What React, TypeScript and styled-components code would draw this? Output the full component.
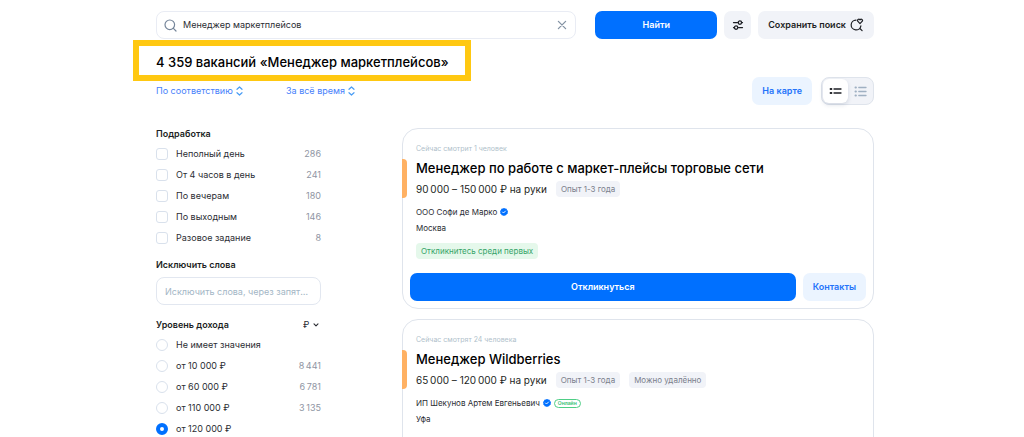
import React from "react";
import styled, { createGlobalStyle, css } from "styled-components";

const GlobalStyle = createGlobalStyle`
  *, *::before, *::after { box-sizing: border-box; }
  body {
    margin: 0;
    background: #fff;
    color: #2b2d33;
    font-family: Inter, "Liberation Sans", sans-serif;
    font-size: 9px;
    line-height: 14px;
  }
  button, input, select { font: inherit; color: inherit; }
  button { cursor: pointer; }
  h1, h2, h3, p { margin: 0; padding: 0; }
  svg { flex: none; }
`;

const Page = styled.div`
  height: 100vh;
  overflow: hidden;
  padding: 11px 150px 0 156px;
`;

const SearchForm = styled.form`
  display: flex;
  gap: 7px;
`;

const SearchField = styled.label`
  flex: 1;
  display: flex;
  align-items: center;
  gap: 6px;
  height: 28px;
  margin-right: 12px;
  padding: 0 8px 0 7px;
  border: 1px solid #e9ecf4;
  border-radius: 8px;
`;

const SearchInput = styled.input`
  flex: 1;
  min-width: 0;
  padding: 0;
  border: 0;
  outline: 0;
  background: none;
`;

const IconButton = styled.button`
  display: flex;
  padding: 0;
  border: 0;
  background: none;
`;

const tones = {
  primary: css`background: #0070ff; color: #fff;`,
  grey: css`background: #f1f3f8; color: #1d1f24;`,
  light: css`background: #ebf4ff; color: #2473fa;`,
};

const Button = styled.button<{ $tone: keyof typeof tones; $width?: number; $grow?: boolean }>`
  display: flex;
  align-items: center;
  justify-content: center;
  gap: 4px;
  height: 28px;
  padding: 0 10px;
  border: 0;
  border-radius: 7px;
  font-weight: 600;
  white-space: nowrap;
  ${(p) => p.$width && `width: ${p.$width}px; padding: 0;`}
  ${(p) => p.$grow && "flex: 1;"}
  ${(p) => tones[p.$tone]}
`;

const Title = styled.h1`
  position: relative;
  width: max-content;
  padding: 13px 0 5px;
  color: #000;
  font-size: 13px;
  font-weight: 500;
  line-height: 20px;

  &::after {
    content: "";
    position: absolute;
    inset: 1px -22px -4px -23px;
    border: 6px solid #ffc811;
    pointer-events: none;
  }
`;

const SortBar = styled.div`
  display: flex;
  align-items: center;
  gap: 43px;
`;

const SelectBox = styled.label<{ $blue?: boolean }>`
  display: flex;
  align-items: center;
  gap: 3px;
  color: ${(p) => (p.$blue ? "#4680fb" : "#2b2d33")};
`;

const Select = styled.select`
  appearance: none;
  padding: 0;
  border: 0;
  outline: 0;
  background: none;
`;

const ViewControls = styled.div`
  display: flex;
  gap: 9px;
  margin-left: auto;
`;

const Toggle = styled.div`
  display: flex;
  height: 28px;
  padding: 1px 0 1px 1px;
  border: 1px solid #dfe4ec;
  border-radius: 8px;
  background: #f1f3f8;
`;

const ToggleButton = styled.button<{ $active?: boolean }>`
  display: flex;
  align-items: center;
  justify-content: center;
  width: 25px;
  padding: 0;
  border: 0;
  border-radius: 6px;
  background: ${(p) => (p.$active ? "#fff" : "transparent")};
  color: ${(p) => (p.$active ? "#1d1f24" : "#9fb0c2")};
  box-shadow: ${(p) => (p.$active ? "0 2px 4px rgba(40, 60, 100, 0.15)" : "none")};
`;

const Columns = styled.div`
  display: grid;
  grid-template-columns: 165px minmax(0, 1fr);
  gap: 81px;
  margin-top: 22px;
`;

const Filters = styled.aside`
  display: flex;
  flex-direction: column;
  gap: 10px;
`;

const Group = styled.div`
  display: flex;
  flex-direction: column;
`;

const GroupHead = styled.div`
  display: flex;
  justify-content: space-between;
  padding-right: 2px;
`;

const GroupTitle = styled.h2`
  color: #1d1f24;
  font-size: 9px;
  font-weight: 600;
  line-height: 14px;
`;

const Options = styled.ul`
  display: grid;
  gap: 1px;
  margin: 3px 0 0;
  padding: 0;
  list-style: none;
`;

const Option = styled.label`
  display: flex;
  align-items: center;
  height: 20px;
`;

const Count = styled.span`
  margin-left: auto;
  color: #8f95a3;
`;

const Mark = styled.input`
  appearance: none;
  width: 12px;
  height: 12px;
  margin: 0 8px 0 0;
  border: 1px solid #d9e1ec;
  border-radius: ${(p) => (p.type === "radio" ? "50%" : "3px")};
  background: #fff;

  &:checked {
    border: 4px solid #0070ff;
  }
`;

const WordsInput = styled.input`
  width: 100%;
  height: 28px;
  margin: 5px 0 3px;
  padding: 0 8px;
  border: 1px solid #e2e7f0;
  border-radius: 8px;
  outline: 0;
  text-overflow: ellipsis;

  &::placeholder {
    color: #a3b6c5;
    opacity: 1;
  }
`;

const Results = styled.main`
  display: grid;
  grid-auto-rows: 1fr;
  align-self: start;
  gap: 10px;
  padding-top: 1px;
`;

const Card = styled.article`
  position: relative;
  display: flex;
  flex-direction: column;
  padding: 13px 7px 7px;
  border: 1px solid #dfe4ec;
  border-radius: 16px;

  &::before {
    content: "";
    position: absolute;
    top: 30px;
    left: -1px;
    width: 5px;
    height: 39px;
    border-radius: 0 4px 4px 0;
    background: #ffb163;
  }
`;

const CardBody = styled.div`
  padding: 0 6px;
`;

const Watching = styled.p`
  color: #b0bfcb;
  font-size: 7px;
`;

const JobTitle = styled.h3`
  margin-top: 3px;
  color: #000;
  font-size: 13px;
  font-weight: 500;
  line-height: 18px;
`;

const PayRow = styled.div`
  display: flex;
  align-items: center;
  gap: 9px;
  margin-top: 4px;
`;

const Pay = styled.span`
  color: #1d1f24;
  font-size: 10px;
`;

const Tag = styled.span<{ $green?: boolean }>`
  display: inline-block;
  padding: 0 5px;
  border-radius: 4px;
  background: ${(p) => (p.$green ? "#e5f8eb" : "#f1f3f8")};
  color: ${(p) => (p.$green ? "#35a468" : "#7b808c")};
  font-size: 8px;
  line-height: 16px;
`;

const Company = styled.p`
  display: flex;
  align-items: center;
  gap: 3px;
  margin-top: 7px;
  font-size: 8px;
  line-height: 16px;
`;

const City = styled.p`
  margin-bottom: 7px;
  font-size: 8px;
  line-height: 16px;
`;

const Online = styled.span`
  padding: 0 3px;
  border: 1px solid #4fce86;
  border-radius: 5px;
  color: #35c070;
  font-size: 5px;
  font-weight: 600;
  line-height: 7px;
`;

const Actions = styled.div`
  display: flex;
  gap: 7px;
  margin-top: auto;
  padding-top: 14px;
`;

const SearchIcon = () => (
  <svg width="13" height="13" viewBox="0 0 13 13" fill="none" stroke="#75859a" strokeWidth="1.2" strokeLinecap="round">
    <circle cx="5.8" cy="5.8" r="4.8" />
    <path d="M9.4 9.4 12 12" />
  </svg>
);

const CloseIcon = () => (
  <svg width="10" height="10" viewBox="0 0 10 10" stroke="#8392a3" strokeWidth="1.3" strokeLinecap="round">
    <path d="m1.4 1.4 7.2 7.2m0-7.2L1.4 8.6" />
  </svg>
);

const SlidersIcon = () => (
  <svg width="12" height="12" viewBox="0 0 12 12" fill="none" stroke="currentColor" strokeWidth="1.3" strokeLinecap="round">
    <path d="M1.5 3.6h4M10 3.6h.5M1.5 8.6H2M6.5 8.6h4" />
    <circle cx="7.9" cy="3.6" r="1.7" />
    <circle cx="4.1" cy="8.6" r="1.7" />
  </svg>
);

const SaveSearchIcon = () => (
  <svg width="14" height="14" viewBox="0 0 14 14" fill="none" stroke="currentColor" strokeWidth="1.2" strokeLinecap="round" strokeLinejoin="round">
    <path d="M6 2.1A4.9 4.9 0 1 0 10.9 7.8M9.9 10.5l2.2 2.2" />
    <path d="M10 5.6 7.7 3.2C6.9 1.9 8.7.4 10 1.8c1.3-1.4 3.1.1 2.3 1.4Z" />
  </svg>
);

const UpDownIcon = () => (
  <svg width="7" height="10" viewBox="0 0 7 10" fill="none" stroke="#4a9df5" strokeWidth="1.2" strokeLinecap="round" strokeLinejoin="round">
    <path d="m1 3.3 2.5-2.3L6 3.3M1 6.7 3.5 9 6 6.7" />
  </svg>
);

const ChevronIcon = () => (
  <svg width="6" height="4" viewBox="0 0 6 4" fill="none" stroke="currentColor" strokeWidth="1.1" strokeLinecap="round" strokeLinejoin="round">
    <path d="m1 .8 2 2 2-2" />
  </svg>
);

const CompactListIcon = () => (
  <svg width="13" height="8" viewBox="0 0 13 8" stroke="currentColor" strokeWidth="1.3" strokeLinecap="round">
    <path d="M5 2h7M5 6h7" />
    <path d="M1.7 2h.6M1.7 6h.6" strokeWidth="2.2" />
  </svg>
);

const ListIcon = () => (
  <svg width="13" height="11" viewBox="0 0 13 11" stroke="currentColor" strokeWidth="1.3" strokeLinecap="round">
    <path d="M4.8 1.5H12M4.8 5.5H12M4.8 9.5H12" />
    <path d="M1.5 1.5h.4M1.5 5.5h.4M1.5 9.5h.4" strokeWidth="2" />
  </svg>
);

const VerifiedIcon = () => (
  <svg width="8" height="8" viewBox="0 0 8 8" fill="none">
    <path d="m4 0 1.2.5 1.4.2.4 1.3 1 1-.3 1.2.1 1.3-1.1.7-.7 1.1-1.2.1L4 8l-1-.6-1.3-.1-.5-1.1L.2 5.5l.2-1.3L0 3l1-1L1.4.7 2.8.5Z" fill="#0070ff" />
    <path d="m2.5 4 1 1 2-2" stroke="#fff" strokeWidth=".9" strokeLinecap="round" />
  </svg>
);

const workOptions: [string, string][] = [
  ["Неполный день", "286"],
  ["От 4 часов в день", "241"],
  ["По вечерам", "180"],
  ["По выходным", "146"],
  ["Разовое задание", "8"],
];

const incomeOptions: [string, string][] = [
  ["Не имеет значения", ""],
  ["от 10 000 ₽", "8\u2009441"],
  ["от 60 000 ₽", "6\u2009781"],
  ["от 110 000 ₽", "3\u2009135"],
  ["от 120 000 ₽", ""],
];

const jobs = [
  {
    watching: "Сейчас смотрит 1 человек",
    title: "Менеджер по работе с маркет-плейсы торговые сети",
    pay: "90\u2009000 – 150\u2009000 ₽ на руки",
    tags: ["Опыт 1-3 года"],
    company: "ООО Софи де Марко",
    city: "Москва",
    online: false,
    open: true,
  },
  {
    watching: "Сейчас смотрят 24 человека",
    title: "Менеджер Wildberries",
    pay: "65\u2009000 – 120\u2009000 ₽ на руки",
    tags: ["Опыт 1-3 года", "Можно удалённо"],
    company: "ИП Шекунов Артем Евгеньевич",
    city: "Уфа",
    online: true,
    open: false,
  },
];

export default function App() {
  return (
    <>
      <GlobalStyle />
      <Page>
        <SearchForm onSubmit={(e) => e.preventDefault()}>
          <SearchField>
            <SearchIcon />
            <SearchInput aria-label="Поиск вакансий" defaultValue="Менеджер маркетплейсов" />
            <IconButton type="button" aria-label="Очистить">
              <CloseIcon />
            </IconButton>
          </SearchField>
          <Button $tone="primary" $width={122}>Найти</Button>
          <Button type="button" $tone="grey" $width={27} aria-label="Фильтры">
            <SlidersIcon />
          </Button>
          <Button type="button" $tone="grey">
            Сохранить поиск
            <SaveSearchIcon />
          </Button>
        </SearchForm>

        <Title>4 359 вакансий «Менеджер маркетплейсов»</Title>

        <SortBar>
          <SelectBox $blue>
            <Select aria-label="Сортировка">
              <option>По соответствию</option>
            </Select>
            <UpDownIcon />
          </SelectBox>
          <SelectBox $blue>
            <Select aria-label="Период">
              <option>За всё время</option>
            </Select>
            <UpDownIcon />
          </SelectBox>
          <ViewControls>
            <Button type="button" $tone="light">На карте</Button>
            <Toggle>
              <ToggleButton $active aria-pressed="true" aria-label="Кратко">
                <CompactListIcon />
              </ToggleButton>
              <ToggleButton aria-pressed="false" aria-label="Подробно">
                <ListIcon />
              </ToggleButton>
            </Toggle>
          </ViewControls>
        </SortBar>

        <Columns>
          <Filters>
            <Group>
              <GroupTitle>Подработка</GroupTitle>
              <Options>
                {workOptions.map(([name, count]) => (
                  <li key={name}>
                    <Option>
                      <Mark type="checkbox" />
                      {name}
                      <Count>{count}</Count>
                    </Option>
                  </li>
                ))}
              </Options>
            </Group>
            <Group>
              <GroupTitle as="label" htmlFor="words">Исключить слова</GroupTitle>
              <WordsInput id="words" placeholder="Исключить слова, через запятую" />
            </Group>
            <Group>
              <GroupHead>
                <GroupTitle>Уровень дохода</GroupTitle>
                <SelectBox>
                  <Select aria-label="Валюта">
                    <option>₽</option>
                  </Select>
                  <ChevronIcon />
                </SelectBox>
              </GroupHead>
              <Options>
                {incomeOptions.map(([name, count], i) => (
                  <li key={name}>
                    <Option>
                      <Mark type="radio" name="income" defaultChecked={i === 4} />
                      {name}
                      <Count>{count}</Count>
                    </Option>
                  </li>
                ))}
              </Options>
            </Group>
          </Filters>

          <Results>
            {jobs.map((job) => (
              <Card key={job.title}>
                <CardBody>
                  <Watching>{job.watching}</Watching>
                  <JobTitle>{job.title}</JobTitle>
                  <PayRow>
                    <Pay>{job.pay}</Pay>
                    {job.tags.map((tag) => (
                      <Tag key={tag}>{tag}</Tag>
                    ))}
                  </PayRow>
                  <Company>
                    {job.company}
                    <VerifiedIcon />
                    {job.online && <Online>Онлайн</Online>}
                  </Company>
                  <City>{job.city}</City>
                  {job.open && <Tag $green>Откликнитесь среди первых</Tag>}
                </CardBody>
                {job.open && (
                  <Actions>
                    <Button $tone="primary" $grow>Откликнуться</Button>
                    <Button $tone="light">Контакты</Button>
                  </Actions>
                )}
              </Card>
            ))}
          </Results>
        </Columns>
      </Page>
    </>
  );
}
